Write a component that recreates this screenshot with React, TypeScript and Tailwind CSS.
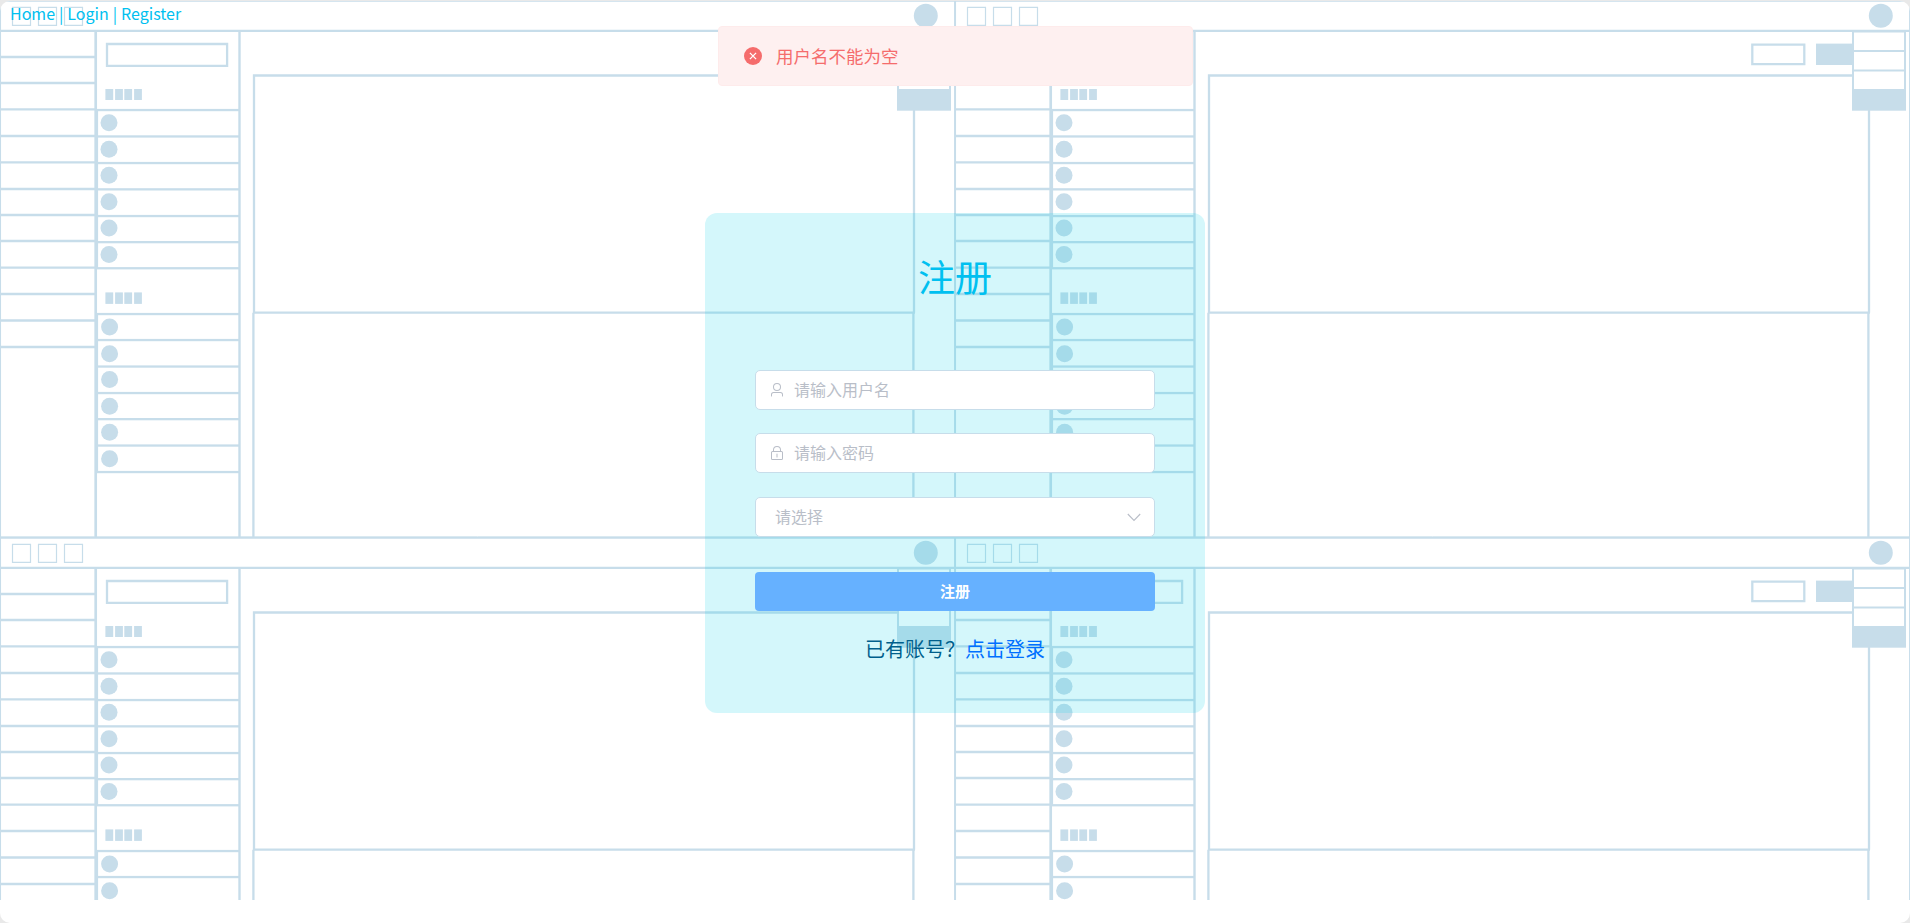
const leftLines = [57, 83, 109.3, 136, 162.3, 189, 215, 241, 267.6, 294, 320.5, 347];
const groups = [
  { x: 109, blocksY: 89, blocksH: 11, lines: [110, 136.4, 163, 189.3, 216, 242.1, 268.2], dots: [122.8, 149.3, 175.3, 201.8, 228, 254.5] },
  { x: 109.6, blocksY: 292.4, blocksH: 11.5, lines: [314, 340, 366.5, 393, 419.1, 445.5, 472], dots: [327, 353.7, 379.5, 406.3, 432.2, 458.8] },
];

function Wireframe() {
  return (
    <svg className="block h-[899px] w-[1910px]" viewBox="0 1 1910 899" aria-hidden="true">
      <defs>
        <pattern id="wire" width="955" height="537" patternUnits="userSpaceOnUse">
          <g fill="none" stroke="#c7ddea" strokeWidth="2.3">
            <path d="M0 0.8H955" strokeWidth="1.8" />
            <path d="M0 536.7H955" strokeWidth="0.8" />
            <path d="M0 30.9H955" />
            <path d="M0.3 0V537M954.8 0V537" strokeWidth="1.5" />
            <path d="M12.5 7.3h18v18h-18zM38.5 7.3h18v18h-18zM64.5 7.3h18v18h-18z" strokeWidth="1.2" />
            {leftLines.map((y) => (
              <path key={y} d={`M1 ${y}H95`} />
            ))}
            <path d="M95.7 31V537" strokeWidth="2.7" />
            <path d="M239.5 31V537" strokeWidth="2.4" />
            <path d="M97.4 110V268M97.4 314V472" strokeWidth="1.4" />
            <path d="M107 44h120.1v21.8h-120.1z" />
            <path d="M254 313V75.5H914V312.7M253.4 312.7V537M913.4 312.7V537M253 312.6H915" />
            <path d="M797.3 44.6h52v19.6h-52z" />
          </g>
          {groups.map((g) => (
            <g key={g.x} fill="#c7ddea">
              {[105.4, 115.1, 124.3, 134.1].map((x) => (
                <rect key={x} x={x} y={g.blocksY} width="7.8" height={g.blocksH} />
              ))}
              {g.lines.map((y) => (
                <rect key={y} x="97" y={y - 1.1} width="142" height="2.3" />
              ))}
              {g.dots.map((y) => (
                <circle key={y} cx={g.x} cy={y} r="8.5" />
              ))}
            </g>
          ))}
          <rect x="861" y="43.6" width="37" height="21.4" fill="#c7ddea" />
          <rect x="898" y="31.5" width="52" height="66" fill="#fff" stroke="#c7ddea" strokeWidth="2" />
          <path d="M897 51H951M897 70.5H951" stroke="#c7ddea" strokeWidth="2.2" />
          <rect x="897" y="89" width="54" height="21.7" fill="#c7ddea" />
          <circle cx="925.8" cy="15.8" r="12" fill="#c7ddea" />
        </pattern>
      </defs>
      <rect width="1910" height="900" fill="url(#wire)" />
    </svg>
  );
}

function UserIcon() {
  return (
    <svg className="h-4 w-4" viewBox="0 0 1024 1024" fill="currentColor">
      <path d="M512 512a192 192 0 1 0 0-384 192 192 0 0 0 0 384m0 64a256 256 0 1 1 0-512 256 256 0 0 1 0 512m320 320v-96a96 96 0 0 0-96-96H288a96 96 0 0 0-96 96v96a32 32 0 1 1-64 0v-96a160 160 0 0 1 160-160h448a160 160 0 0 1 160 160v96a32 32 0 1 1-64 0" />
    </svg>
  );
}

function LockIcon() {
  return (
    <svg className="h-4 w-4" viewBox="0 0 1024 1024" fill="currentColor">
      <path d="M224 448a32 32 0 0 0-32 32v384a32 32 0 0 0 32 32h576a32 32 0 0 0 32-32V480a32 32 0 0 0-32-32zm0-64h576a96 96 0 0 1 96 96v384a96 96 0 0 1-96 96H224a96 96 0 0 1-96-96V480a96 96 0 0 1 96-96" />
      <path d="M512 544a32 32 0 0 1 32 32v192a32 32 0 1 1-64 0V576a32 32 0 0 1 32-32m192-160v-64a192 192 0 1 0-384 0v64zM512 64a256 256 0 0 1 256 256v128H256V320A256 256 0 0 1 512 64" />
    </svg>
  );
}

const field =
  "flex h-10 w-full items-center rounded-[5px] border border-[#c7ddea] bg-white px-[13px] text-base leading-none text-[#b9bec8]";

export default function App() {
  return (
    <div className="h-[923px] w-[1910px] overflow-hidden bg-[#e9e9e9] pt-px font-['Noto_Sans_CJK_SC','Noto_Sans',sans-serif]">
      <div className="relative h-[922px] overflow-hidden rounded-[10px] bg-white">
        <div className="absolute inset-0">
          <Wireframe />
        </div>
        <nav className="relative flex h-6 items-center gap-1 pl-[10px] text-base text-[#00c0f0]">
          <a>Home</a>
          <span>|</span>
          <a>Login</a>
          <span>|</span>
          <a>Register</a>
        </nav>
        <main className="relative mx-auto mt-[188px] flex h-[500px] w-[500px] flex-col items-center rounded-xl bg-[#00d0e7]/[0.17] px-[50px]">
          <h1 className="mt-9 h-[54px] text-[37px] leading-[54px] text-[#00c0f0]">注册</h1>
          <form className="mt-[67px] flex w-full flex-col">
            <div className={field}>
              <UserIcon />
              <span className="ml-[9px] pb-[2px]">请输入用户名</span>
            </div>
            <div className={`${field} mt-[23px]`}>
              <LockIcon />
              <span className="ml-[9px] pb-[2px]">请输入密码</span>
            </div>
            <div className={`${field} mt-6 justify-between`}>
              <span className="ml-[6px] pb-[2px]">请选择</span>
              <svg className="h-4 w-4" viewBox="0 0 16 16" fill="none" stroke="currentColor" strokeWidth="1.1">
                <path d="M2.8 5 9 11.5 15.2 5" />
              </svg>
            </div>
            <button
              type="button"
              className="mt-[35px] h-[39px] w-full rounded bg-[#66b1ff] pb-px text-[15px] font-bold text-white"
            >
              注册
            </button>
          </form>
          <p className="mt-[23px] text-[20px] leading-[30px] text-[#005f8c]">
            已有账号？<a className="text-[#0070ff]">点击登录</a>
          </p>
        </main>
        <div className="absolute top-[25px] left-[718px] flex h-[60px] w-[475px] items-center rounded border border-[#feebeb] bg-[#fef0f0] pl-[25px] text-[#f56c6c]">
          <svg className="h-[18px] w-[18px]" viewBox="0 0 18 18">
            <circle cx="9" cy="9" r="9" fill="#f56c6c" />
            <path d="m5.9 5.9 6.2 6.2m0-6.2-6.2 6.2" stroke="#fff" strokeWidth="1.3" />
          </svg>
          <span className="ml-[14px] text-[17.5px] leading-none">用户名不能为空</span>
        </div>
      </div>
    </div>
  );
}
